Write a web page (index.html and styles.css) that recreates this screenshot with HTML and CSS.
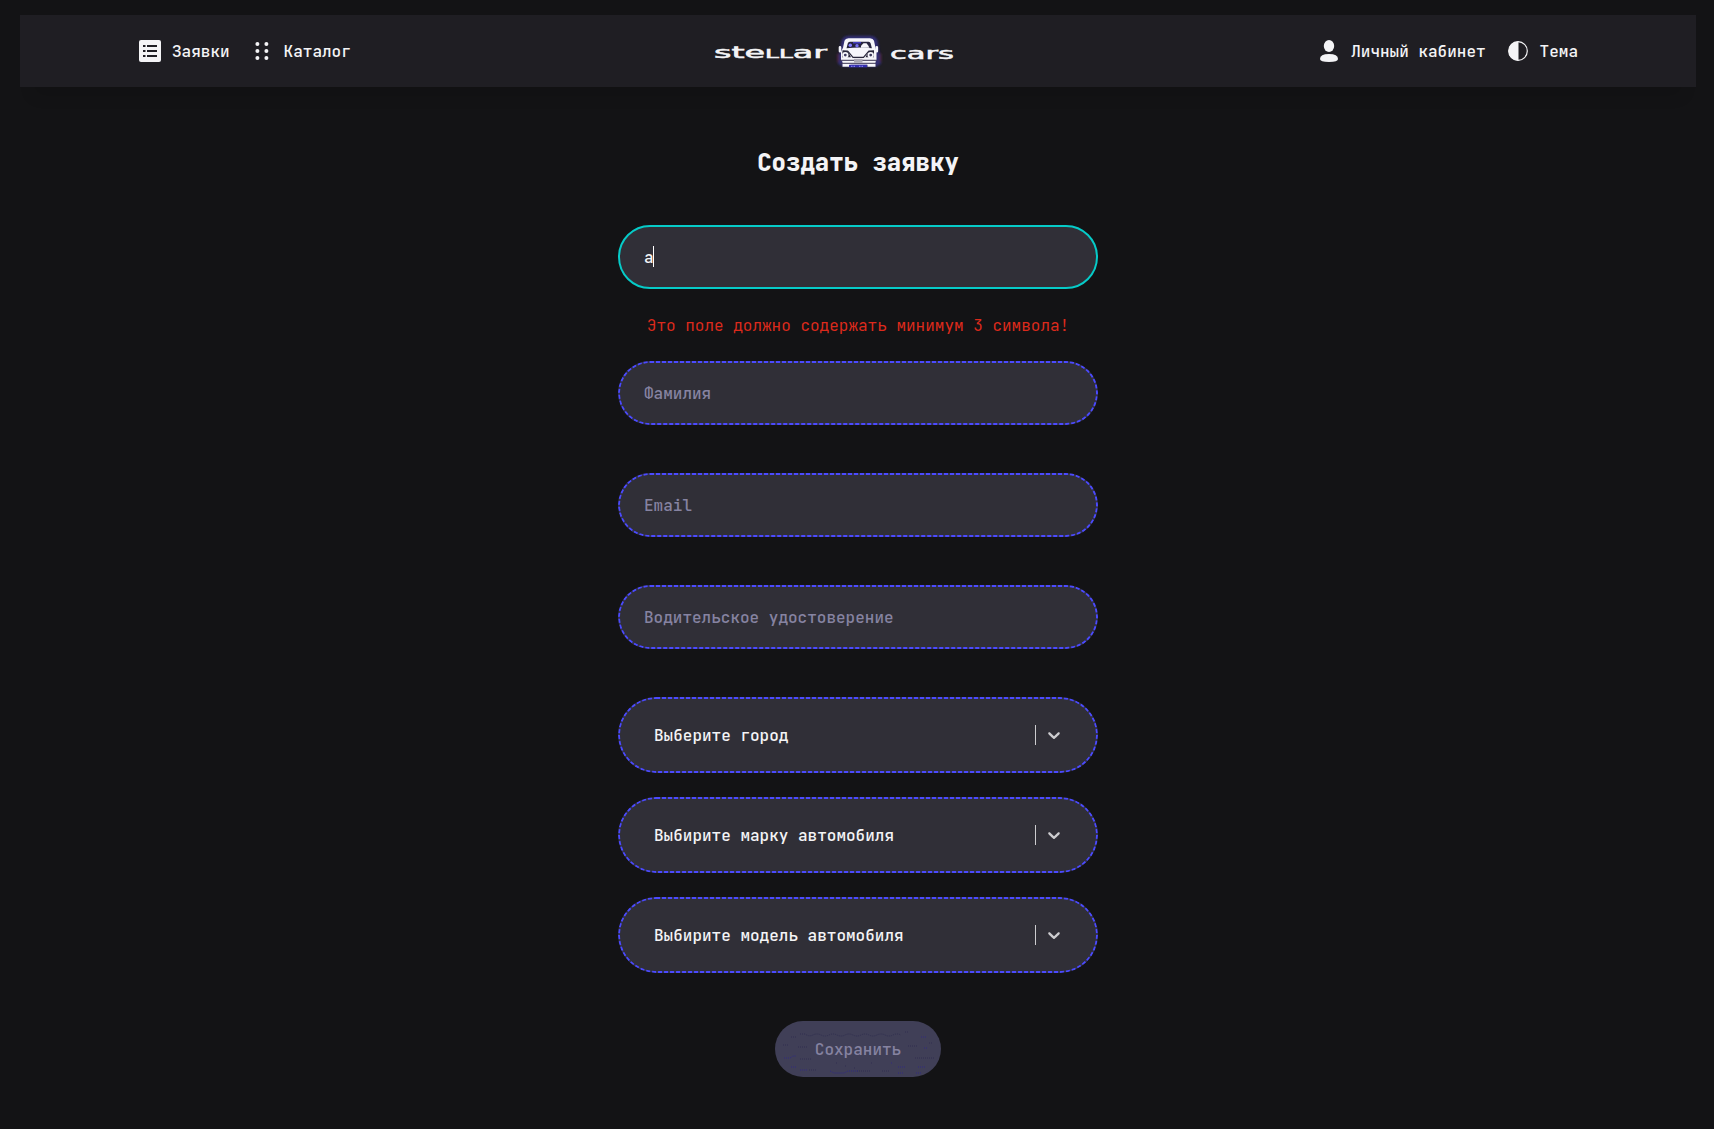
FILE: index.html
```html
<!DOCTYPE html>
<html lang="ru">
<head>
<meta charset="utf-8">
<title>Stellar Cars</title>
<link rel="stylesheet" href="styles.css">
</head>
<body>
<header class="header">
  <nav class="nav">
    <a class="nav-item">
      <svg class="icon" viewBox="0 0 24 24"><rect x="1" y="1" width="22" height="22" rx="2" fill="#f4f4f6"/><path d="M9 7h10M9 12h10M9 17h10" stroke="#1f1e24" stroke-width="2"/><path d="M5 7h2.500M5 12h2.500M5 17h2.500" stroke="#1f1e24" stroke-width="2"/></svg>
      <span class="nav-label">Заявки</span>
    </a>
    <a class="nav-item">
      <svg class="icon" viewBox="0 0 24 24" fill="#f4f4f6"><circle cx="7.4" cy="5" r="2"/><circle cx="16.4" cy="5" r="2"/><circle cx="7.4" cy="12" r="2"/><circle cx="16.4" cy="12" r="2"/><circle cx="7.4" cy="19" r="2"/><circle cx="16.4" cy="19" r="2"/></svg>
      <span class="nav-label">Каталог</span>
    </a>
  </nav>
  <svg class="logo" viewBox="0 0 240 36">
    <defs><filter id="glow" x="-20%" y="-20%" width="140%" height="140%"><feGaussianBlur stdDeviation="1"/></filter></defs>
    <text class="logo-text" x="0" y="25" textLength="113" lengthAdjust="spacingAndGlyphs">ste<tspan class="logo-small">ll</tspan>ar</text>
    <g transform="translate(0 .8)">
      <g filter="url(#glow)">
        <path d="M127 9q1-7 8-7h21q7 0 8 7l1 9 2 4v8l-5 3h-33l-5-3v-8l2-4z" fill="#302d72"/>
        <path d="M124 20v8M166.500 20v8" stroke="#542544" stroke-width="1.500"/>
      </g>
      <path d="M129 14l1.500-7q.8-2.500 4-2.500h21.500q3.200 0 4 2.500l1.500 7 1 4v8.500l-1 1.500v5h-8v-2h-17v2h-8v-5l-1.500-1.500V18z" fill="#f6f6fb"/>
      <path d="M132.500 14.500l1.300-5q.4-1.500 2-1.500h18.800q1.600 0 2 1.500l1.300 5q-12.700-1.500-25.400 0z" fill="#26243f"/>
      <circle cx="136.300" cy="11.500" r="1.700" fill="#817cff"/><circle cx="143" cy="12" r="1.700" fill="#7772f0"/>
      <path d="M139 9h8" stroke="#4b45d8" stroke-width="1.300"/>
      <path d="M147 14v-2l2.500-2.500h3l1.500 2 1.500 2.500z" fill="#f6f6fb"/>
      <path d="M126 13.500v4M162.800 13.500v4" stroke="#f6f6fb" stroke-width="2.600" stroke-linecap="round"/>
      <path d="M128.500 16.500l5 .3 3.500 6.700H128zM160 16.500l-5 .3-3.500 6.700H160z" fill="#29273b"/>
      <path d="M133.500 17l5.500 6.500h10.500l5.500-6.500" fill="none" stroke="#29273b" stroke-width="1.200"/>
      <circle cx="131.300" cy="21.300" r="3.200" fill="#f6f6fb"/><circle cx="131.300" cy="21.300" r="1.400" fill="#3b385c"/>
      <circle cx="156.700" cy="21.300" r="3.200" fill="#f6f6fb"/><circle cx="156.700" cy="21.300" r="1.400" fill="#3b385c"/>
      <path d="M126 26.500h15M148 26.500h15M127 29.500h35" stroke="#373352" stroke-width="1"/>
      <rect x="140" y="25" width="8.500" height="4" fill="#aaa7b4"/>
      <path d="M135 31h18v2.500h-18z" fill="#332dac"/><path d="M137 32.500h4m4 0h5" stroke="#8f8aff" stroke-width="1" stroke-dasharray="1.500 1"/>
    </g>
    <text class="logo-text" x="176" y="26" textLength="64" lengthAdjust="spacingAndGlyphs">cars</text>
  </svg>
  <nav class="nav">
    <a class="nav-item">
      <svg class="icon" viewBox="0 0 24 24" fill="#f4f4f6"><ellipse cx="12" cy="7" rx="5.200" ry="6"/><path d="M3 20q0-5 9-5t9 5q0 3-9 3t-9-3z"/></svg>
      <span class="nav-label">Личный кабинет</span>
    </a>
    <a class="nav-item">
      <svg class="icon" viewBox="0 0 24 24"><circle cx="12" cy="12" r="9.300" fill="none" stroke="#f4f4f6" stroke-width="1.200"/><path d="M12.500 2.500H12a9.500 9.500 0 0 0 0 19h.5z" fill="#f4f4f6"/></svg>
      <span class="nav-label">Тема</span>
    </a>
  </nav>
</header>
<main class="form">
  <h1 class="title">Создать заявку</h1>
  <div class="field field-active"><span>а</span><i class="caret"></i></div>
  <p class="error">Это поле должно содержать минимум 3 символа!</p>
  <div class="field">Фамилия</div>
  <div class="field">Email</div>
  <div class="field">Водительское удостоверение</div>
  <div class="selects">
    <div class="select"><span class="select-label">Выберите город</span><i class="separator"></i><svg class="chevron" viewBox="0 0 20 20"><path d="M4.516 7.548c0.436-0.446 1.043-0.481 1.576 0l3.908 3.747 3.908-3.747c0.533-0.481 1.141-0.446 1.574 0 0.436 0.445 0.408 1.197 0 1.615-0.406 0.418-4.695 4.502-4.695 4.502-0.217 0.223-0.502 0.335-0.787 0.335s-0.570-0.112-0.789-0.335c0 0-4.287-4.084-4.695-4.502s-0.436-1.170 0-1.615z"/></svg></div>
    <div class="select"><span class="select-label">Выбирите марку автомобиля</span><i class="separator"></i><svg class="chevron" viewBox="0 0 20 20"><path d="M4.516 7.548c0.436-0.446 1.043-0.481 1.576 0l3.908 3.747 3.908-3.747c0.533-0.481 1.141-0.446 1.574 0 0.436 0.445 0.408 1.197 0 1.615-0.406 0.418-4.695 4.502-4.695 4.502-0.217 0.223-0.502 0.335-0.787 0.335s-0.570-0.112-0.789-0.335c0 0-4.287-4.084-4.695-4.502s-0.436-1.170 0-1.615z"/></svg></div>
    <div class="select"><span class="select-label">Выбирите модель автомобиля</span><i class="separator"></i><svg class="chevron" viewBox="0 0 20 20"><path d="M4.516 7.548c0.436-0.446 1.043-0.481 1.576 0l3.908 3.747 3.908-3.747c0.533-0.481 1.141-0.446 1.574 0 0.436 0.445 0.408 1.197 0 1.615-0.406 0.418-4.695 4.502-4.695 4.502-0.217 0.223-0.502 0.335-0.787 0.335s-0.570-0.112-0.789-0.335c0 0-4.287-4.084-4.695-4.502s-0.436-1.170 0-1.615z"/></svg></div>
  </div>
  <button class="submit" disabled>Сохранить</button>
</main>
</body>
</html>
```
FILE: styles.css
```css
* {
  box-sizing: border-box;
}

body {
  margin: 0;
  padding: 15px 18px 0 20px;
  height: 1129px;
  overflow: hidden;
  background: #131315;
  color: #f4f4f6;
  font: 500 16px/22px "JetBrains Mono", "DejaVu Sans Mono", monospace;
}

.header {
  display: flex;
  align-items: center;
  justify-content: space-between;
  height: 72px;
  padding: 0 118px;
  background: #1f1e23;
  box-shadow: 0 22px 16px -14px rgba(0, 0, 0, 0.12);
}

.nav,
.nav-item {
  display: flex;
  align-items: center;
}

.nav {
  gap: 20px;
}

.nav-item {
  gap: 10px;
}

.nav-label {
  padding-top: 2px;
}

.icon {
  width: 24px;
  height: 24px;
}

.logo {
  width: 240px;
  height: 36px;
}

.logo-text {
  fill: #f4f4f6;
  stroke: #f4f4f6;
  stroke-width: 0.5px;
  font: 400 15.5px "DejaVu Sans", sans-serif;
}

.logo-small {
  font-size: 11.5px;
  text-transform: uppercase;
}

.form {
  display: flex;
  flex-direction: column;
  align-items: center;
  width: 480px;
  margin: 0 auto 0 598px;
}

.title {
  margin: 60px 0 46px;
  font-size: 24px;
  line-height: 32px;
  font-weight: 800;
}

.field,
.select {
  display: flex;
  align-items: center;
  width: 480px;
}

.field {
  height: 64px;
  padding: 2px 26px 0;
  margin-bottom: 48px;
  border-radius: 32px;
  background: #302f37 url("data:image/svg+xml,%3Csvg xmlns='http://www.w3.org/2000/svg' width='480' height='64'%3E%3Cg fill='none' stroke='%234b4aff' stroke-width='2'%3E%3Crect x='1' y='1' width='478' height='62' rx='31' stroke-opacity='.15'/%3E%3Crect x='1' y='1' width='478' height='62' rx='31' stroke-dasharray='4 2'/%3E%3C/g%3E%3C/svg%3E");
  color: #8683a1;
}

.field-active {
  margin-bottom: 0;
  padding: 2px 24px 0;
  border: 2px solid #06cbc8;
  background: #302f37;
  color: #f4f4f6;
}

.caret {
  width: 1px;
  height: 21px;
  margin: -3px 0 0 -1px;
  background: #fff;
}

.error {
  margin: 26px 0 24px;
  font-weight: 400;
  color: #dc2a1c;
}

.selects {
  display: flex;
  flex-direction: column;
  gap: 24px;
}

.select {
  height: 76px;
  padding: 0 34px 0 36px;
  border-radius: 38px;
  background: #302f37 url("data:image/svg+xml,%3Csvg xmlns='http://www.w3.org/2000/svg' width='480' height='76'%3E%3Cg fill='none' stroke='%234b4aff' stroke-width='2'%3E%3Crect x='1' y='1' width='478' height='74' rx='37' stroke-opacity='.15'/%3E%3Crect x='1' y='1' width='478' height='74' rx='37' stroke-dasharray='4 2'/%3E%3C/g%3E%3C/svg%3E");
}

.select-label {
  flex: 1;
  padding-top: 2px;
}

.separator {
  width: 1px;
  height: 20px;
  background: #cccccf;
}

.chevron {
  width: 20px;
  height: 20px;
  margin: 0 0 0 8px;
  fill: #cccccf;
}

.submit {
  width: 166px;
  height: 56px;
  margin-top: 48px;
  padding: 2px 0 0;
  border: 0;
  border-radius: 28px;
  background: #403f57 url("data:image/svg+xml,%3Csvg xmlns='http://www.w3.org/2000/svg' width='166' height='56'%3E%3Cg fill='none' stroke-dasharray='1 1'%3E%3Cpath stroke='%23302f50' d='M16 16h5m4-3h5q4 3 8 1t8 0 8 0 8 0 8 0 8 0 8 0 8 0 8 0 8 0 8 0 8 0m4-3h3M23 26h9M8 24h6m119 1h10m11-3h4M25 38h12m103-1h19M34 49h8m40 1h14m11 0h7M61 42h1m8 3h1m8 2h1m16-5h1'/%3E%3Cpath stroke='%23302b80' d='M9 37h6l3-2h3m125-19h6m-3 11h4M16 46h6m3 3h7m23 1l4 2h10l4-2h10m40-4h8m-8 6h6m14-6h7m-9 6h6m-31-10h1'/%3E%3C/g%3E%3C/svg%3E");
  color: #8683a1;
  font: inherit;
}
```
